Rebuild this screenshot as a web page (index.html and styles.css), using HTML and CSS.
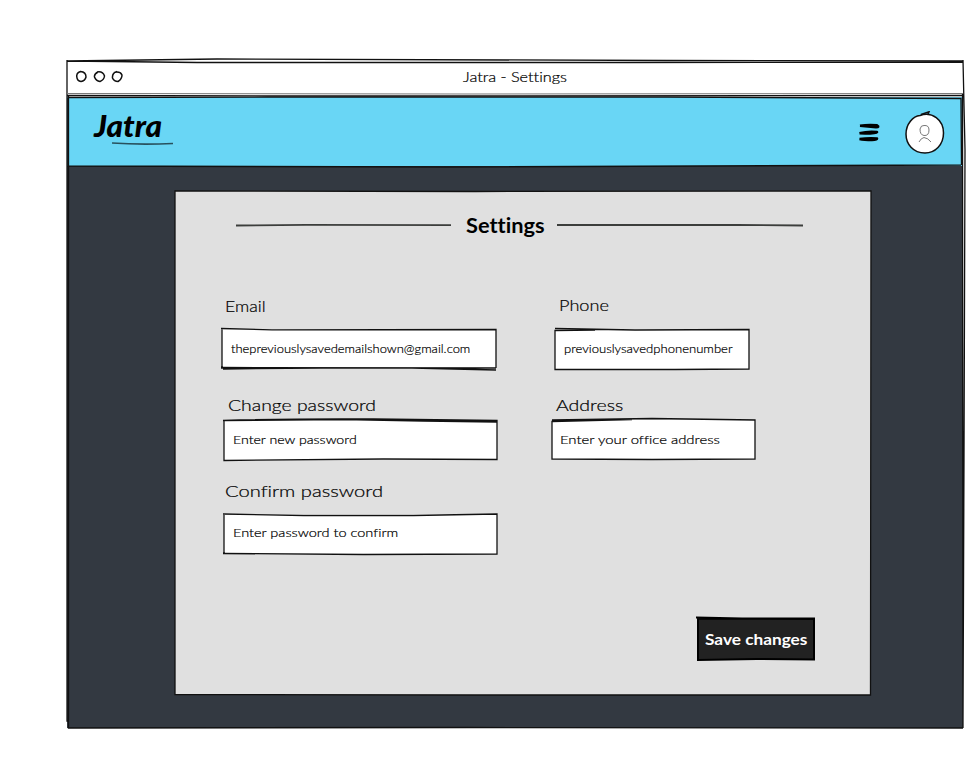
FILE: index.html
```html
<!DOCTYPE html>
<html lang="en">
<head>
<meta charset="utf-8">
<title>Jatra - Settings</title>
<link rel="stylesheet" href="styles.css">
</head>
<body>
<div class="window">
  <div class="titlebar">
    <svg class="dots" width="48" height="14" viewBox="0 0 48 14">
      <path d="M5 1.500Q1 2 .7 6Q1 11 5 11.500Q9 11 10 7Q10 2 4.500 1.500M22 2Q18 4 18.500 7Q20 11 24 11.500Q28 10 28.500 6Q27 1 21 2M41 1.500Q36 3 36.500 8Q38 11.500 42 11.500Q46 9 46 5Q44 1 38 2.500"/>
    </svg>
    <span class="title"><span class="hand">Jatra - Settings</span></span>
  </div>
  <header class="header">
    <div class="brand">
      <span class="logo">Jatra</span>
      <svg class="underline" width="62" height="4" viewBox="0 0 62 4"><path d="M0 1Q28 3 61 1.500"/></svg>
    </div>
    <div class="actions">
      <svg class="menu" width="23" height="19" viewBox="0 0 23 19">
        <path d="M2 2.800Q10 1.500 19 2.300Q22 4 18 4.300Q10 3.500 2 2.800M1.500 10.300Q10 8 19 9Q18 10.800 1.500 10.300M1.500 16Q10 15 19 15.500Q19 17 14 17Q6 17 1.500 16"/>
      </svg>
      <svg class="avatar" width="40" height="44" viewBox="0 0 40 44">
        <path class="disc" d="M15 4.500C27 0 38.500 9 38.500 22C38.500 34 30 42 20 42C8 42 1 33 1 23C1 13 8 5 15 4.500Z"/>
        <path class="tuft" d="M16 3.500L22 1.500L24 .8L23 3"/>
        <path class="person" d="M15 18Q16 14 19 14.500Q24 14 24 19Q24 25 19 24.500Q15 24 15 18M14 31Q16 27 19 26.500Q23 27 26 31"/>
      </svg>
    </div>
    <svg class="frame" viewBox="0 0 896 69" preserveAspectRatio="none">
      <path d="M2 .5L300 0L600 0L894 1.500L894.500 68M1 1V69L380 70L894 68"/>
    </svg>
  </header>
  <main class="stage">
    <section class="card">
      <div class="heading">
        <svg class="rule-left" width="215" height="4" viewBox="0 0 215 4"><path d="M0 2.500L70 1.800L215 2.200"/></svg>
        <h1 class="hand">Settings</h1>
        <svg class="rule-right" width="246" height="4" viewBox="0 0 246 4"><path d="M0 2L180 2L246 2.500"/></svg>
      </div>
      <form class="form">
        <div class="column">
          <div class="field email">
            <label class="hand">Email</label>
            <div class="input"><span class="hand">thepreviouslysavedemailshown@gmail.com</span>
              <svg class="frame" viewBox="0 0 274 40" preserveAspectRatio="none"><path d="M-1 -.5L50 .8L274 .5V39M0 0V40M-1 38.500L274 39M1 40L100 39L190 39L274 41"/></svg>
            </div>
          </div>
          <div class="field new-password">
            <label class="hand">Change password</label>
            <div class="input"><span class="hand">Enter new password</span>
              <svg class="frame" viewBox="0 0 274 40" preserveAspectRatio="none"><path d="M-1 .5Q70 -1.500 150 -1L274 .5V39.500L160 39L0 40.500V.5L120 -.5L200 1L274 2"/></svg>
            </div>
          </div>
          <div class="field confirm-password">
            <label class="hand">Confirm password</label>
            <div class="input"><span class="hand">Enter password to confirm</span>
              <svg class="frame" viewBox="0 0 274 40" preserveAspectRatio="none"><path d="M-1 0L80 1.500L190 1.500L274 0V40L140 40.500L-1 39.500M0 0V40"/></svg>
            </div>
          </div>
        </div>
        <div class="column">
          <div class="field phone">
            <label class="hand">Phone</label>
            <div class="input"><span class="hand">previouslysavedphonenumber</span>
              <svg class="frame" viewBox="0 0 194 40" preserveAspectRatio="none"><path d="M0 -.5L80 1L194 .5V40L120 40.500L0 40.500V1.500L40 1"/></svg>
            </div>
          </div>
          <div class="field address">
            <label class="hand">Address</label>
            <div class="input"><span class="hand">Enter your office address</span>
              <svg class="frame" viewBox="0 0 203 40" preserveAspectRatio="none"><path d="M0 0L100 -1.500L203 0V39L100 39.500L0 39V1.500L80 -.5"/></svg>
            </div>
          </div>
        </div>
      </form>
      <button class="save" type="button"><span class="hand">Save changes</span>
        <svg class="frame" viewBox="0 0 117 42" preserveAspectRatio="none"><path d="M-1 -.5L45 .5L117 .5V41.500L60 41L1 42V.5L117 1"/></svg>
      </button>
      <svg class="frame" viewBox="0 0 696 504" preserveAspectRatio="none"><path d="M0 0L300 .5L696 0L695.500 504L300 504L0 503.500Z"/></svg>
    </section>
  </main>
  <svg class="frame" viewBox="0 0 896 668" preserveAspectRatio="none">
    <path d="M0 1L150 -1L600 .5L896 1M0 1L130 2.500L560 2.500L896 2M0 0V661L1.500 661M1.500 35V668L400 667.500L896 668M896 0L898 90L897 400L896 661M895.500 34L896 668"/>
    <path class="soft" d="M0 33.500L400 34L896 33.500"/>
    <path d="M0 35.500L200 36L896 35.500"/>
  </svg>
</div>
</body>
</html>
```
FILE: styles.css
```css
* { box-sizing: border-box; }
body {
  margin: 0;
  padding: 60px 14px 45px 67px;
  background: #fff;
  color: #000;
  font-family: Lato, "Open Sans", sans-serif;
  font-weight: 300;
  font-variant-ligatures: none;
}
.window {
  position: relative;
  display: flex;
  flex-direction: column;
  width: 896px;
  height: 668px;
}
.frame {
  position: absolute;
  inset: 0;
  width: 100%;
  height: 100%;
  overflow: visible;
  pointer-events: none;
}
svg path { fill: none; stroke: #111; stroke-width: 1.3; }
svg .soft { stroke: #777; stroke-width: 1; }
.hand {
  display: inline-block;
  white-space: nowrap;
  line-height: 20px;
  transform: scaleX(var(--stretch, 1));
  transform-origin: left center;
  -webkit-text-stroke: .2px currentColor;
}
.titlebar {
  display: flex;
  align-items: center;
  height: 37px;
  padding: 0 9px 4px;
}
.dots path { stroke-width: 1.5; }
.title { margin-left: 339px; font-size: 13px; }
.title .hand { --stretch: 1.25; }
.header {
  position: relative;
  display: flex;
  justify-content: space-between;
  height: 69px;
  padding: 13px 18px 0 27px;
  background: #69d6f5;
}
.brand { display: flex; flex-direction: column; }
.logo {
  height: 32px;
  font: italic 900 30px/30px Lato, sans-serif;
  color: #000;
  transform: scaleX(1.05);
  transform-origin: left;
}
.underline { margin-left: 18px; }
.underline path { stroke: #28515d; stroke-width: 1.6; }
.actions { display: flex; gap: 24px; }
.menu { margin-top: 13px; }
.menu path { fill: #000; stroke: #000; stroke-width: 2.6; stroke-linejoin: round; }
.avatar { margin-top: 1px; }
.avatar .disc { fill: #fff; stroke-width: 1.5; }
.avatar .tuft { stroke-width: 1.5; }
.avatar .person { stroke: #555; stroke-width: .8; }
.stage {
  flex: 1;
  padding: 25px 92px 33px 108px;
  background: #333941;
}
.card {
  position: relative;
  display: flex;
  flex-direction: column;
  height: 504px;
  padding-top: 21px;
  background: #e0e0e0;
}
.heading { display: flex; align-items: center; height: 26px; padding-left: 61px; }
.heading path { stroke: #3c3e3c; stroke-width: 1.8; }
h1 { width: 79px; margin: 0 12px 0 15px; font-size: 20px; font-weight: 700; color: #000; }
h1.hand { --stretch: 1.09; -webkit-text-stroke: 0; }
.form { display: flex; gap: 56px; padding: 57px 0 0 47px; }
.column { display: flex; flex-direction: column; }
.field { display: flex; flex-direction: column; align-items: flex-start; }
.field label { height: 20px; margin-left: 4px; font-size: 15.5px; }
.input {
  position: relative;
  display: flex;
  align-items: center;
  width: 274px;
  height: 40px;
  padding-left: 9px;
  background: #fff;
}
.input .hand { font-size: 12px; }
.email label { --stretch: 1.14; margin-left: 3px; padding-top: 1px; }
.email .input { margin-top: 14px; }
.email .input .hand { --stretch: 1.08; }
.new-password { margin: 26px 0 0 2px; }
.new-password label { --stretch: 1.25; }
.new-password .input { width: 273px; margin-top: 5px; }
.new-password .input .hand { --stretch: 1.18; }
.confirm-password { margin: 21px 0 0 2px; }
.confirm-password label { --stretch: 1.3; margin-left: 1px; }
.confirm-password .input { width: 273px; margin-top: 13px; padding-bottom: 3px; }
.confirm-password .input .hand { --stretch: 1.21; }
.phone { margin-left: 2px; }
.phone label { --stretch: 1.17; }
.phone .input { width: 194px; margin-top: 14px; }
.phone .input .hand { --stretch: 1.09; }
.address { margin: 26px 0 0 -1px; }
.address label { --stretch: 1.26; }
.address .input { width: 203px; margin-top: 5px; padding: 0 0 1px 8px; }
.address .input .hand { --stretch: 1.24; }
.save {
  position: relative;
  width: 117px;
  height: 42px;
  margin: 64px 0 0 522px;
  padding: 0 0 0 8px;
  border: 0;
  background: #222;
  color: #fff;
  font: 700 15px Lato, sans-serif;
  text-align: left;
}
.save .hand { --stretch: 1.15; -webkit-text-stroke: 0; }
.save .frame path { stroke: #000; stroke-width: 2; }
```
